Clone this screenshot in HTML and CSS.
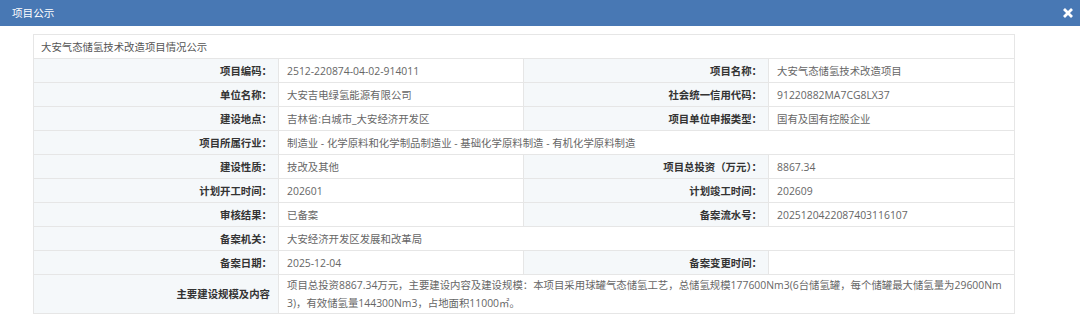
FILE: index.html
```html
<!DOCTYPE html>
<html lang="zh">
<head>
<meta charset="utf-8">
<title>项目公示</title>
<link rel="stylesheet" href="styles.css">
</head>
<body>
<div class="dialog">
  <div class="dialog-header">
    <span class="dialog-title">项目公示</span>
    <span class="dialog-close">
      <svg width="12" height="12" viewBox="0 0 12 12"><path d="M2 2L10 10M10 2L2 10" stroke="#fff" stroke-width="2.8" stroke-linecap="butt"/></svg>
    </span>
  </div>
  <div class="dialog-body">
    <table class="info">
      <colgroup><col class="c1"><col class="c2"><col class="c3"><col class="c4"></colgroup>
      <tr><td class="caption" colspan="4">大安气态储氢技术改造项目情况公示</td></tr>
      <tr><td class="lbl">项目编码：</td><td class="val">2512-220874-04-02-914011</td><td class="lbl">项目名称：</td><td class="val">大安气态储氢技术改造项目</td></tr>
      <tr><td class="lbl">单位名称：</td><td class="val">大安吉电绿氢能源有限公司</td><td class="lbl">社会统一信用代码：</td><td class="val">91220882MA7CG8LX37</td></tr>
      <tr><td class="lbl">建设地点：</td><td class="val">吉林省:白城市_大安经济开发区</td><td class="lbl">项目单位申报类型：</td><td class="val">国有及国有控股企业</td></tr>
      <tr><td class="lbl">项目所属行业：</td><td class="val" colspan="3">制造业 - 化学原料和化学制品制造业 - 基础化学原料制造 - 有机化学原料制造</td></tr>
      <tr><td class="lbl">建设性质：</td><td class="val">技改及其他</td><td class="lbl">项目总投资（万元）：</td><td class="val">8867.34</td></tr>
      <tr><td class="lbl">计划开工时间：</td><td class="val">202601</td><td class="lbl">计划竣工时间：</td><td class="val">202609</td></tr>
      <tr><td class="lbl">审核结果：</td><td class="val">已备案</td><td class="lbl">备案流水号：</td><td class="val">2025120422087403116107</td></tr>
      <tr><td class="lbl">备案机关：</td><td class="val" colspan="3">大安经济开发区发展和改革局</td></tr>
      <tr><td class="lbl">备案日期：</td><td class="val">2025-12-04</td><td class="lbl">备案变更时间：</td><td class="val"></td></tr>
      <tr class="tall"><td class="lbl lbl-nc">主要建设规模及内容</td><td class="val" colspan="3">项目总投资8867.34万元，主要建设内容及建设规模：本项目采用球罐气态储氢工艺，总储氢规模177600Nm3(6台储氢罐，每个储罐最大储氢量为29600Nm3)，有效储氢量144300Nm3，占地面积11000㎡。</td></tr>
    </table>
  </div>
</div>
</body>
</html>
```
FILE: styles.css
```css
* { box-sizing: border-box; }
html, body { margin: 0; padding: 0; background: #fff; }
body {
  font-family: "Open Sans", "Noto Sans CJK SC", "Noto Sans", sans-serif;
  font-size: 10.4px;
  color: #666;
}
.dialog-header {
  height: 26px;
  background: #4878b4;
  display: flex;
  align-items: center;
  justify-content: space-between;
  padding: 0 5px 0 12px;
}
.dialog-title {
  color: #fff;
  font-size: 10.6px;
  line-height: 26px;
}
.dialog-close {
  display: flex;
  width: 12px;
  height: 12px;
  margin-right: 1px;
}
.dialog-body {
  padding: 8px 0 0 33px;
}
.info {
  width: 981px;
  table-layout: fixed;
  border-collapse: collapse;
  border: 1px solid #e6e6e6;
}
.info col.c1, .info col.c2, .info col.c3 { width: 245px; }
.info col.c4 { width: 246px; }
.info td {
  border: 1px solid #e6e6e6;
  height: 24px;
  line-height: 16px;
  padding: 3px 8px 3px 7px;
  word-break: break-all;
}
.info td.caption {
  color: #555;
  padding-left: 7px;
}
.info td.lbl {
  background: #f5f8fa;
  color: #333;
  font-weight: bold;
  text-align: right;
  padding-right: 6px;
}
.info td.lbl-nc { padding-right: 8px; }
.info td.val {
  color: #666;
  padding-left: 8px;
}
.info tr.tall td { height: 39px; line-height: 18px; padding-top: 1px; padding-bottom: 1px; }
```
